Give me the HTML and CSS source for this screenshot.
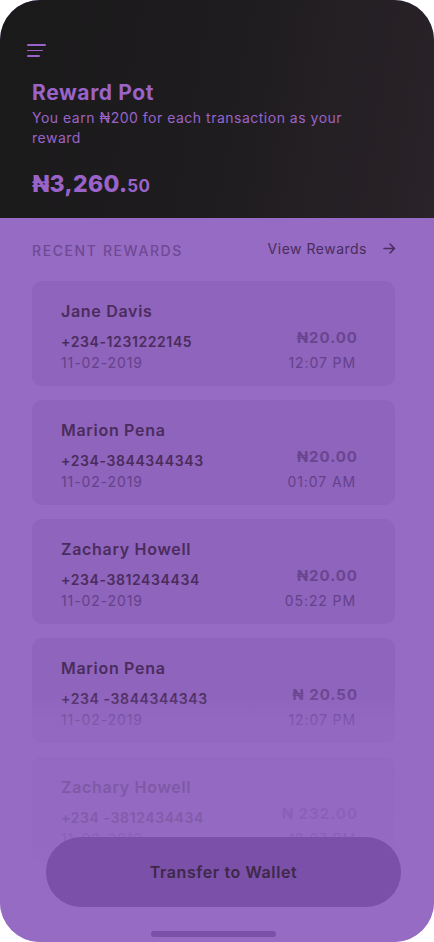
FILE: index.html
```html
<!DOCTYPE html>
<html>
<head>
<meta charset="utf-8">
<link rel="stylesheet" href="styles.css">
</head>
<body>
<div class="phone">
  <header class="top">
    <div class="menu">
      <span class="l1"></span><span class="l2"></span><span class="l3"></span>
    </div>
    <h1 class="title">Reward Pot</h1>
    <p class="sub">You earn ₦200 for each transaction as your reward</p>
    <div class="pot">₦3,260.<span class="dec">50</span></div>
  </header>
  <main class="body">
    <div class="head-row">
      <span class="recent">RECENT REWARDS</span>
      <span class="view">View Rewards
        <svg width="13" height="11" viewBox="0 0 13 11"><path d="M1 5.5H11.5M7 1L11.5 5.5L7 10" fill="none" stroke="#4a2d5e" stroke-width="1.5" stroke-linecap="round" stroke-linejoin="round"/></svg>
      </span>
    </div>
    <div class="list">
      <div class="card">
        <div class="name">Jane Davis</div>
        <div class="row"><span class="phone-no">+234-1231222145</span><span class="amt">₦20.00</span></div>
        <div class="row"><span class="date">11-02-2019</span><span class="time">12:07 PM</span></div>
      </div>
      <div class="card">
        <div class="name">Marion Pena</div>
        <div class="row"><span class="phone-no">+234-3844344343</span><span class="amt">₦20.00</span></div>
        <div class="row"><span class="date">11-02-2019</span><span class="time">01:07 AM</span></div>
      </div>
      <div class="card">
        <div class="name">Zachary Howell</div>
        <div class="row"><span class="phone-no">+234-3812434434</span><span class="amt">₦20.00</span></div>
        <div class="row"><span class="date">11-02-2019</span><span class="time">05:22 PM</span></div>
      </div>
      <div class="card">
        <div class="name">Marion Pena</div>
        <div class="row"><span class="phone-no">+234 -3844344343</span><span class="amt">₦ 20.50</span></div>
        <div class="row"><span class="date">11-02-2019</span><span class="time">12:07 PM</span></div>
      </div>
      <div class="card">
        <div class="name">Zachary Howell</div>
        <div class="row"><span class="phone-no">+234 -3812434434</span><span class="amt">₦ 232.00</span></div>
        <div class="row"><span class="date">11-02-2019</span><span class="time">12:07 PM</span></div>
      </div>
    </div>
    <div class="fade"></div>
    <button class="transfer">Transfer to Wallet</button>
    <div class="home-bar"></div>
  </main>
</div>
</body>
</html>
```

FILE: styles.css
```css
* { box-sizing: border-box; margin: 0; padding: 0; }
html, body { background: #ffffff; }
body {
  font-family: "Inter", "Open Sans", sans-serif;
}
.phone {
  width: 434px;
  height: 942px;
  border-radius: 40px;
  overflow: hidden;
  display: flex;
  flex-direction: column;
  background: #956bc4;
}
.top {
  height: 218px;
  background: linear-gradient(100deg, #1b1a1b 0%, #1e1c1e 50%, #2a2329 100%);
  padding: 44px 32px 0 32px;
  color: #9a63c9;
}
.menu {
  display: flex;
  flex-direction: column;
  gap: 4px;
  margin-left: -5px;
  height: 13px;
}
.menu span {
  display: block;
  height: 2.5px;
  background: #9a63c9;
  border-radius: 1px;
}
.menu .l1 { width: 19px; }
.menu .l2 { width: 16px; }
.menu .l3 { width: 13px; }
.title {
  margin-top: 24px;
  font-size: 21px;
  font-weight: 700;
  line-height: 24px;
  letter-spacing: 0.6px;
}
.sub {
  margin-top: 3px;
  font-size: 14px;
  line-height: 20px;
  width: 340px;
  letter-spacing: 0.5px;
}
.pot {
  margin-top: 22px;
  font-size: 23px;
  font-weight: 800;
  line-height: 28px;
  letter-spacing: 0.3px;
}
.pot .dec { font-size: 17px; font-weight: 700; }
.body {
  flex: 1;
  position: relative;
  padding: 22px 38px 0 32px;
  overflow: hidden;
}
.head-row {
  display: flex;
  justify-content: space-between;
  align-items: center;
  height: 20px;
}
.recent {
  font-size: 14px;
  letter-spacing: 1.6px;
  color: #6f4993;
  font-weight: 500;
}
.view {
  display: flex;
  align-items: center;
  gap: 16px;
  font-size: 14px;
  color: #4a2d5e;
  margin-top: -4px;
  letter-spacing: 0.5px;
}
.list {
  margin-top: 21px;
  display: flex;
  flex-direction: column;
  gap: 14px;
  margin-right: 1px;
}
.card {
  background: #8e64bd;
  border-radius: 10px;
  height: 105px;
  padding: 20px 37px 0 29px;
  color: #4b2c5c;
}
.name {
  font-size: 16px;
  font-weight: 600;
  line-height: 20px;
  letter-spacing: 0.7px;
}
.row {
  display: flex;
  justify-content: space-between;
  align-items: center;
}
.row:nth-child(2) { margin-top: 9px; height: 20px; }
.row:nth-child(3) { margin-top: 2px; height: 20px; }
.phone-no {
  font-size: 14px;
  font-weight: 600;
  letter-spacing: 0.6px;
  margin-top: 2px;
}
.amt {
  font-size: 15px;
  font-weight: 700;
  letter-spacing: 1px;
  color: #6a4590;
  margin-top: -6px;
}
.date, .time {
  font-size: 14px;
  letter-spacing: 0.9px;
  color: #65418a;
}
.time { margin-right: 2px; }
.fade {
  position: absolute;
  left: 0;
  right: 0;
  top: 474px;
  height: 260px;
  background: linear-gradient(180deg, rgba(149,107,196,0) 0%, rgba(149,107,196,0.55) 12%, rgba(149,107,196,0.68) 30%, rgba(149,107,196,0.78) 60%, rgba(149,107,196,0.85) 100%);
  pointer-events: none;
}
.transfer {
  position: absolute;
  left: 46px;
  top: 619px;
  width: 355px;
  height: 70px;
  border: none;
  border-radius: 35px;
  background: #7a50a8;
  color: #3e2848;
  font-family: inherit;
  font-size: 16px;
  font-weight: 600;
  letter-spacing: 0.6px;
}
.home-bar {
  position: absolute;
  left: 151px;
  top: 713px;
  width: 125px;
  height: 6px;
  border-radius: 3px;
  background: #7a50a8;
}
```
